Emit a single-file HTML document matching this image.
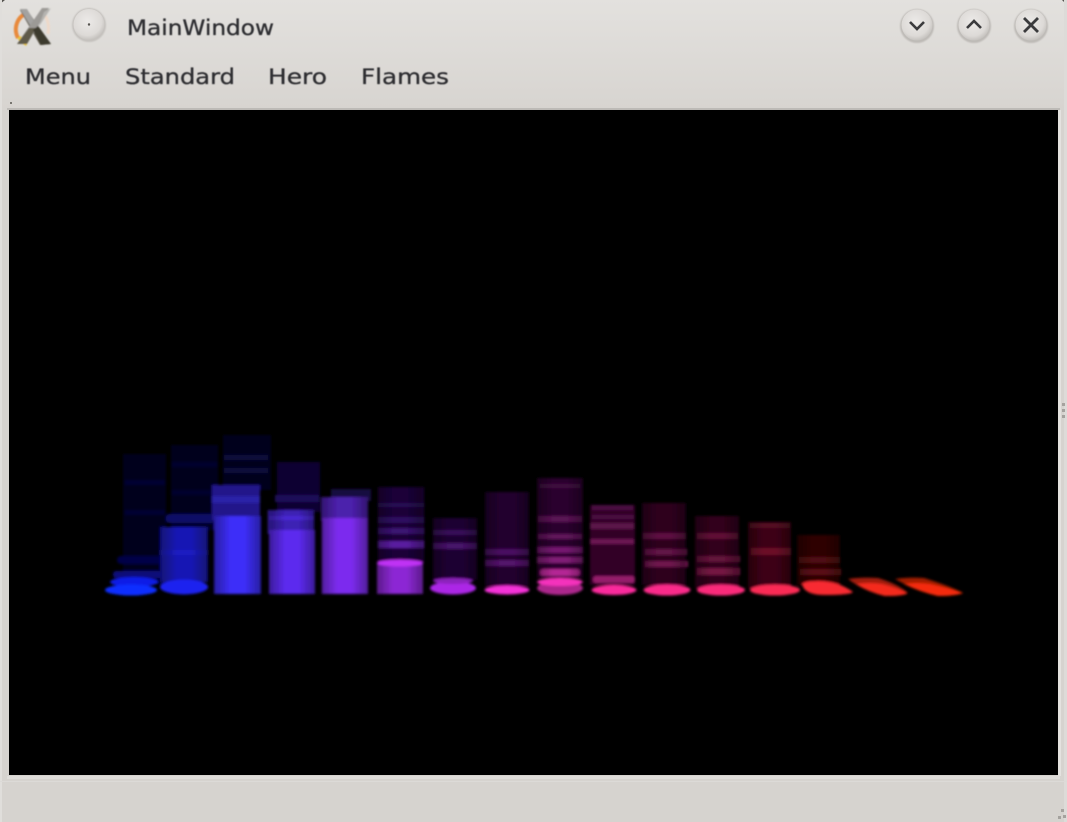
<!DOCTYPE html>
<html><head><meta charset="utf-8"><title>MainWindow</title>
<style>
html,body{margin:0;padding:0;width:1067px;height:822px;overflow:hidden;background:#d6d3cf}
svg{display:block}
text{font-family:"DejaVu Sans","Liberation Sans",sans-serif;fill:#2f2f33;stroke:#2f2f33;stroke-width:.3px}
</style></head><body>
<svg width="1067" height="822" viewBox="0 0 1067 822" xmlns="http://www.w3.org/2000/svg">
<defs>
<linearGradient id="top" x1="0" y1="0" x2="0" y2="1"><stop offset="0" stop-color="#e3e1de"/><stop offset="1" stop-color="#d7d4d0"/></linearGradient>
<radialGradient id="btn" cx=".45" cy=".4" r=".65"><stop offset="0" stop-color="#eceae8"/><stop offset=".7" stop-color="#dddad7"/><stop offset="1" stop-color="#bdbab6"/></radialGradient>
<linearGradient id="sh" x1="0" y1="0" x2="1" y2="0"><stop offset="0" stop-color="#000" stop-opacity=".35"/><stop offset=".35" stop-color="#000" stop-opacity="0"/><stop offset=".65" stop-color="#000" stop-opacity="0"/><stop offset="1" stop-color="#000" stop-opacity=".35"/></linearGradient>
<filter id="b" x="-10%" y="-10%" width="120%" height="120%"><feGaussianBlur stdDeviation="1.3"/></filter>
<filter id="s" x="-20%" y="-20%" width="140%" height="140%"><feGaussianBlur stdDeviation=".9"/></filter>
<filter id="t" x="-5%" y="-20%" width="110%" height="140%"><feGaussianBlur stdDeviation=".4"/></filter>
</defs>

<rect width="1067" height="822" fill="#d6d3cf"/>
<rect width="1067" height="110" fill="url(#top)"/>
<path d="M0 0h5L0 4zM1067 0h-5l5 5z" fill="#55534f"/>
<rect x="0" y="0" width="2" height="822" fill="#e0dedb"/>
<rect x="1064" y="0" width="3" height="822" fill="#dddbd8"/>
<rect x="7" y="108" width="1053" height="2" fill="#bdbab6"/>
<rect x="1058" y="110" width="3" height="666" fill="#e4e2df"/>
<rect x="7" y="776" width="1053" height="3" fill="#dfddda"/>
<rect x="0" y="781" width="1067" height="1" fill="#dcdad7"/>

<!-- app icon -->
<g filter="url(#s)">
<path d="M23 15 A18 18 0 0 0 18 38" fill="none" stroke="#e8893a" stroke-width="4"/>
<path d="M19 37 Q22 42 27 44" fill="none" stroke="#e8c23a" stroke-width="4"/>
<path d="M44 14 Q50 22 48 34" fill="none" stroke="#eed9c9" stroke-width="3"/>
<path d="M20 10 L27 10 L51 44 L40 45 Z" fill="#5a5546"/>
<path d="M20 9 L27 9 L36 24 L31 27 Z" fill="#a3a2a0"/>
<path d="M49 8 L42 8 L17 44 L27 44 Z" fill="#9c9a96"/>
<path d="M29 28 L36 28 L27 44 L17 44 Z" fill="#5f5a48"/>
<path d="M33 30 L41 45 L51 44 L38 26 Z" fill="#3d3a2e"/>
<path d="M44 12 L51 8 L38 28 Z" fill="#b5b4b1"/>
</g>

<!-- pin button -->
<circle cx="89" cy="25" r="17" fill="#c4c1bd" filter="url(#s)"/>
<circle cx="89" cy="24.500" r="15.500" fill="url(#btn)"/>
<circle cx="89" cy="24.500" r="1.200" fill="#55534f"/>

<text x="127" y="35" font-size="21" textLength="147" lengthAdjust="spacingAndGlyphs" filter="url(#t)">MainWindow</text>

<!-- window buttons -->
<circle cx="917" cy="26" r="17" fill="#bdbab6" filter="url(#s)"/>
<circle cx="917" cy="25" r="15.500" fill="url(#btn)"/>
<path d="M910 22 L917 29 L924 22" fill="none" stroke="#3b3b3d" stroke-width="2.600"/>
<circle cx="974" cy="26" r="17" fill="#bdbab6" filter="url(#s)"/>
<circle cx="974" cy="25" r="15.500" fill="url(#btn)"/>
<path d="M967 28 L974 21 L981 28" fill="none" stroke="#3b3b3d" stroke-width="2.600"/>
<circle cx="1031" cy="26" r="17" fill="#bdbab6" filter="url(#s)"/>
<circle cx="1031" cy="25" r="15.500" fill="url(#btn)"/>
<path d="M1024 18 L1038 32 M1038 18 L1024 32" fill="none" stroke="#3b3b3d" stroke-width="2.800"/>

<!-- menu -->
<g font-size="21" filter="url(#t)">
<text x="25" y="84" textLength="66" lengthAdjust="spacingAndGlyphs">Menu</text>
<text x="125" y="84" textLength="110" lengthAdjust="spacingAndGlyphs">Standard</text>
<text x="268" y="84" textLength="59" lengthAdjust="spacingAndGlyphs">Hero</text>
<text x="361" y="84" textLength="88" lengthAdjust="spacingAndGlyphs">Flames</text>
</g>
<rect x="10" y="102" width="2" height="2" fill="#77756f"/>

<!-- grips -->
<g fill="#a5a29e"><rect x="1062" y="403" width="3" height="3"/><rect x="1062" y="409" width="3" height="3"/><rect x="1062" y="415" width="3" height="3"/>
<rect x="1061" y="809" width="3" height="3"/><rect x="1058" y="816" width="3" height="3"/><rect x="1063" y="815" width="3" height="3"/></g>

<!-- viewport -->
<rect x="9" y="110" width="1049" height="665" fill="#000"/>

<g filter="url(#b)">
<!-- bar 1 -->
<rect x="123" y="454" width="43" height="130" fill="#02021e"/>
<rect x="125" y="480" width="40" height="5" fill="#040430"/><rect x="125" y="510" width="40" height="5" fill="#040430"/>
<rect x="117" y="556" width="48" height="8" rx="4" fill="#050546"/>
<rect x="113" y="571" width="48" height="7" rx="3" fill="#08087a"/>
<ellipse cx="134" cy="582" rx="24" ry="5" fill="#0f1ee6"/>
<ellipse cx="131" cy="590" rx="26" ry="5.500" fill="#0d2dff"/>
<!-- bar 2 -->
<rect x="171" y="445" width="47" height="85" fill="#03031f"/>
<rect x="172" y="462" width="45" height="5" fill="#05052e"/><rect x="172" y="490" width="45" height="5" fill="#05052e"/>
<rect x="166" y="514" width="48" height="9" rx="3" fill="#090966"/>
<rect x="160" y="527" width="48" height="55" fill="#1919b4"/>
<rect x="160" y="550" width="48" height="5" fill="#1c1cc2"/>
<rect x="160" y="527" width="48" height="55" fill="url(#sh)"/>
<ellipse cx="184" cy="587" rx="24" ry="7.500" fill="#1e24ef"/>
<!-- bar 3 -->
<rect x="223" y="435" width="48" height="55" fill="#03031c"/>
<rect x="224" y="455" width="44" height="5" fill="#07073a"/><rect x="224" y="468" width="44" height="5" fill="#07073a"/>
<rect x="212" y="485" width="48" height="35" fill="#20188a"/>
<rect x="212" y="496" width="48" height="7" fill="#2a20a8"/>
<rect x="214" y="516" width="47" height="78" fill="#3d2ef8"/>
<rect x="214" y="516" width="47" height="78" fill="url(#sh)"/>
<!-- bar 4 -->
<rect x="277" y="462" width="43" height="50" fill="#0e0530"/>
<rect x="275" y="495" width="44" height="7" fill="#1a0c58"/>
<rect x="268" y="510" width="46" height="24" fill="#3c20b4"/>
<rect x="269" y="516" width="45" height="4" fill="#4a28d4"/>
<rect x="269" y="530" width="46" height="64" fill="#5c2aee"/>
<rect x="269" y="510" width="46" height="84" fill="url(#sh)"/>
<!-- bar 5 -->
<rect x="331" y="489" width="40" height="12" fill="#180840"/>
<rect x="321" y="497" width="47" height="24" fill="#4c20ac"/>
<rect x="322" y="518" width="46" height="76" fill="#7c2cee"/>
<rect x="321" y="497" width="47" height="97" fill="url(#sh)"/>
<!-- bar 6 -->
<rect x="378" y="487" width="46" height="75" fill="#1a0638"/>
<rect x="378" y="503" width="46" height="4" fill="#280c54"/><rect x="378" y="517" width="46" height="6" fill="#2e0e60"/>
<rect x="378" y="528" width="46" height="6" fill="#3a1272"/><rect x="378" y="541" width="46" height="7" fill="#5a1ca0"/>
<rect x="377" y="562" width="46" height="32" fill="#8c28d4"/>
<rect x="377" y="487" width="46" height="107" fill="url(#sh)"/>
<ellipse cx="400" cy="563" rx="23" ry="3.500" fill="#c030f4"/>
<!-- bar 7 -->
<rect x="433" y="518" width="44" height="62" fill="#1e0432"/>
<rect x="433" y="530" width="44" height="5" fill="#380e5a"/><rect x="433" y="543" width="44" height="6" fill="#47126a"/>
<rect x="433" y="518" width="44" height="62" fill="url(#sh)"/>
<ellipse cx="453" cy="588" rx="23" ry="6.500" fill="#ac28e6"/>
<ellipse cx="453" cy="581" rx="20" ry="3" fill="#8c20bc"/>
<!-- bar 8 -->
<rect x="485" y="492" width="44" height="94" fill="#22042e"/>
<rect x="485" y="549" width="44" height="6" fill="#4a0e62"/><rect x="485" y="560" width="44" height="6" fill="#54126c"/>
<rect x="485" y="492" width="44" height="94" fill="url(#sh)"/>
<ellipse cx="507" cy="590" rx="22.500" ry="4.500" fill="#f430d8"/>
<!-- bar 9 -->
<rect x="537" y="478" width="46" height="100" fill="#2a042e"/>
<rect x="540" y="484" width="40" height="4" fill="#400c40"/>
<rect x="538" y="516" width="44" height="6" fill="#5a1254"/><rect x="538" y="534" width="44" height="5" fill="#62145c"/>
<rect x="537" y="547" width="46" height="6" fill="#741870"/><rect x="537" y="557" width="46" height="6" fill="#801c76"/>
<rect x="540" y="569" width="40" height="7" rx="3" fill="#b42894"/>
<rect x="537" y="478" width="46" height="100" fill="url(#sh)"/>
<ellipse cx="560" cy="588" rx="23" ry="7" fill="#ac288c"/>
<ellipse cx="560" cy="582" rx="23" ry="4" fill="#f430bc"/>
<!-- bar 10 -->
<rect x="590" y="505" width="45" height="80" fill="#300428"/>
<rect x="592" y="505" width="41" height="5" fill="#4c0e42"/><rect x="592" y="515" width="42" height="4" fill="#4c0e42"/>
<rect x="590" y="523" width="44" height="6" fill="#5c124a"/><rect x="590" y="539" width="44" height="5" fill="#6c1652"/>
<rect x="593" y="576" width="42" height="7" rx="3" fill="#941c6a"/>
<ellipse cx="614" cy="590" rx="22.500" ry="5" fill="#fa2c9c"/>
<!-- bar 11 -->
<rect x="642" y="503" width="44" height="82" fill="#2e041e"/>
<rect x="643" y="533" width="43" height="6" fill="#5e1042"/><rect x="645" y="549" width="42" height="6" fill="#621246"/><rect x="645" y="561" width="43" height="6" fill="#70164e"/>
<rect x="642" y="503" width="44" height="82" fill="url(#sh)"/>
<ellipse cx="667" cy="590" rx="23.500" ry="5.500" fill="#fa2c8a"/>
<!-- bar 12 -->
<rect x="695" y="516" width="44" height="72" fill="#30041a"/>
<rect x="697" y="533" width="41" height="6" fill="#601036"/><rect x="697" y="556" width="43" height="6" fill="#64123a"/><rect x="697" y="568" width="43" height="7" fill="#741642"/>
<rect x="695" y="516" width="44" height="72" fill="url(#sh)"/>
<ellipse cx="721" cy="590" rx="24" ry="5.500" fill="#fa2c7a"/>
<!-- bar 13 -->
<rect x="748" y="522" width="43" height="66" fill="#3c0414"/>
<rect x="750" y="523" width="40" height="5" fill="#540a22"/><rect x="751" y="548" width="40" height="7" fill="#6c1028"/>
<rect x="748" y="522" width="43" height="66" fill="url(#sh)"/>
<ellipse cx="775" cy="590" rx="25" ry="5.500" fill="#fa2c54"/>
<!-- bar 14 -->
<rect x="797" y="535" width="43" height="50" fill="#2e0406"/>
<rect x="799" y="557" width="41" height="6" fill="#500a12"/><rect x="800" y="569" width="41" height="6" fill="#5a0c16"/>
<rect x="797" y="535" width="43" height="50" fill="url(#sh)"/>
<path d="M802 584 Q805 581 818 581 Q838 581 853 592 Q850 595 825 595 Q804 595 802 584Z" fill="#f82c30"/>
<!-- discs 15 16 -->
<path d="M848 579 Q860 577 878 578 Q898 584 908 593 Q905 596 885 596 Q862 590 848 579Z" fill="#a01a10"/>
<path d="M856 584 Q870 582 882 584 Q898 588 907 593 Q904 596 885 596 Q868 592 856 584Z" fill="#f42a1c"/>
<path d="M895 579 Q908 577 924 578 Q950 586 963 593 Q955 596 938 596 Q914 590 895 579Z" fill="#a01c06"/>
<path d="M904 584 Q916 582 930 584 Q948 588 963 593 Q955 596 938 596 Q920 592 904 584Z" fill="#f42c08"/>
</g>
</svg>
</body></html>
